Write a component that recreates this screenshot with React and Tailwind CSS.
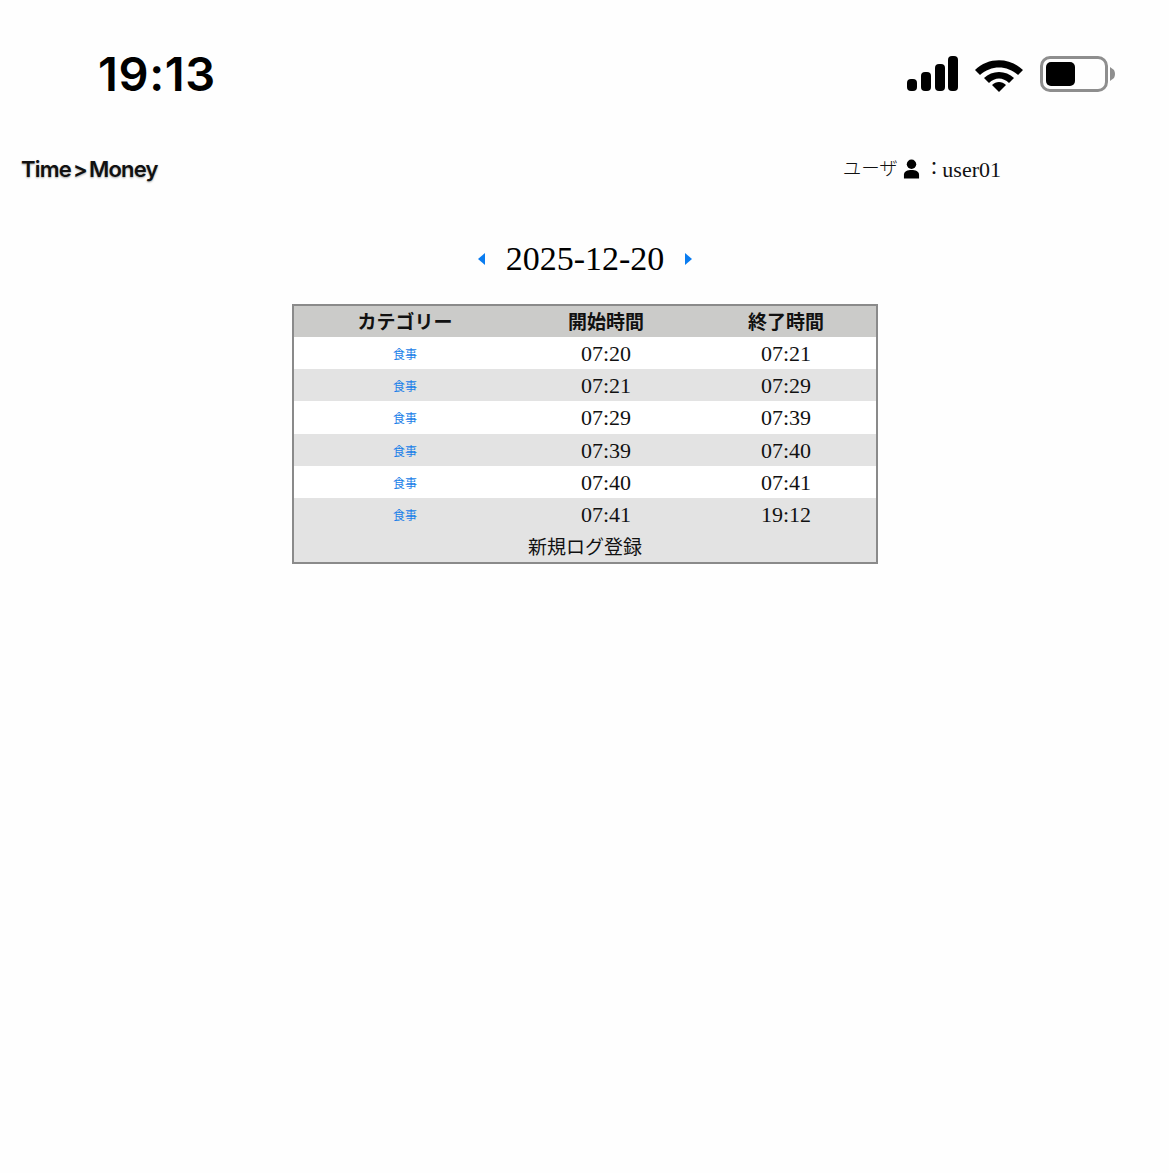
const serif = 'font-["Liberation_Serif","Noto_Sans_CJK_JP",serif]'

const logs = [
  ['07:20', '07:21'],
  ['07:21', '07:29'],
  ['07:29', '07:39'],
  ['07:39', '07:40'],
  ['07:40', '07:41'],
  ['07:41', '19:12'],
]

function StatusBar() {
  return (
    <div className="h-[136px] flex items-start justify-between pt-[44px] pl-[98px] pr-[53px]">
      <span className='font-["Inter",sans-serif] text-[47px] leading-[60px] font-semibold text-black tracking-[0.6px]'>19:13</span>
      <div className="flex items-center gap-[16px] mt-[12px]">
        <svg width="52" height="36" viewBox="0 0 52 36" fill="black" className="-mr-[1px]">
          <rect x="0" y="23" width="10" height="12" rx="4" />
          <rect x="14" y="16" width="10" height="19" rx="4" />
          <rect x="28" y="8" width="10" height="27" rx="4" />
          <rect x="41" y="0" width="10" height="35" rx="4" />
        </svg>
        <svg width="50" height="36" viewBox="0 0 50 36" fill="black">
          <path d="M1 14 C14 1 36 1 49 14 L44 19 C33 9 17 9 6 19 Z" />
          <path d="M10 22 C18 14 32 14 40 22 L35 27 C29 21 21 21 15 27 Z" />
          <path d="M18 29 C22 25 28 25 32 29 L25 36 Z" />
        </svg>
        <div className="flex items-center gap-[2px]">
          <div className="w-[68px] h-[36px] rounded-[10px] border-[3px] border-[#8e8e8e] p-[3px]">
            <div className="w-[29px] h-full rounded-[5px] bg-black" />
          </div>
          <svg width="6" height="14" viewBox="0 0 6 14" fill="#8e8e8e">
            <path d="M0 0 L4 3 Q6 7 4 11 L0 14 Z" />
          </svg>
        </div>
      </div>
    </div>
  )
}

function Header() {
  return (
    <div className="h-[66px] flex items-center justify-between pl-[21px] pr-[168px]">
      <span className='font-["Inter",sans-serif] text-[22px] font-semibold tracking-[-0.8px] text-[#111] [text-shadow:0_1px_2px_rgba(0,0,0,0.35)]'>
        Time<span className="mx-[2px]">&gt;</span>Money
      </span>
      <div className={`flex items-center text-[21.5px] text-[#111] ${serif}`}>
        <span className="text-[18.5px] font-light pt-[2px]">ユーザ</span>
        <svg width="17" height="20" viewBox="0 0 18 20" fill="black" className="ml-[5px]">
          <circle cx="9" cy="5" r="5" />
          <path d="M1 20 V16 C1 12.5 5 11 9 11 C13 11 17 12.5 17 16 V20 Z" />
        </svg>
        <span className="ml-[5px] text-[18.5px] pt-[2px]">：</span>
        <span className="-ml-[1px] text-[22px]">user01</span>
      </div>
    </div>
  )
}

function DateNav() {
  return (
    <div className={`pl-[1px] flex justify-center items-center h-[40px] mt-[37px] ${serif}`}>
      <div className="w-0 h-0 border-y-[6px] border-y-transparent border-r-[7px] border-r-[#0a7cf0]" />
      <span className="text-[34px] text-black mx-[21px] leading-none">2025-12-20</span>
      <div className="w-0 h-0 border-y-[6px] border-y-transparent border-l-[7px] border-l-[#0a7cf0]" />
    </div>
  )
}

function LogTable() {
  return (
    <div className="mt-[25px] ml-[292px] w-[586px] border-2 border-[#8a8a8a]">
      <table className={`w-full table-fixed border-collapse leading-none text-[22px] text-[#111] ${serif}`}>
        <colgroup>
          <col className="w-[222px]" />
          <col className="w-[180px]" />
          <col className="w-[180px]" />
        </colgroup>
        <thead>
          <tr className="h-[31px] bg-[#cbcbc9] text-[19px]">
            <th className="font-bold p-0 pt-[2px]">カテゴリー</th>
            <th className="font-bold p-0 pt-[2px]">開始時間</th>
            <th className="font-bold p-0 pt-[2px]">終了時間</th>
          </tr>
        </thead>
        <tbody>
          {logs.map(([start, end], i) => (
            <tr key={i} className={`h-[32.2px] ${i % 2 === 0 ? 'bg-white' : 'bg-[#e3e3e3]'}`}>
              <td className='p-0 pt-[2px] text-center align-middle font-["Noto_Sans_CJK_JP",sans-serif] text-[12px] text-[#1a80e8]'>食事</td>
              <td className="p-0 pt-[2px] text-center align-middle">{start}</td>
              <td className="p-0 pt-[2px] text-center align-middle">{end}</td>
            </tr>
          ))}
          <tr className="h-[32px] bg-[#e3e3e3]">
            <td colSpan={3} className="p-0 pt-[2px] text-center align-middle text-[19px]">新規ログ登録</td>
          </tr>
        </tbody>
      </table>
    </div>
  )
}

export default function App() {
  return (
    <div className="w-[1169px] h-[1173px] bg-[#fefefe] overflow-hidden">
      <StatusBar />
      <Header />
      <DateNav />
      <LogTable />
    </div>
  )
}
